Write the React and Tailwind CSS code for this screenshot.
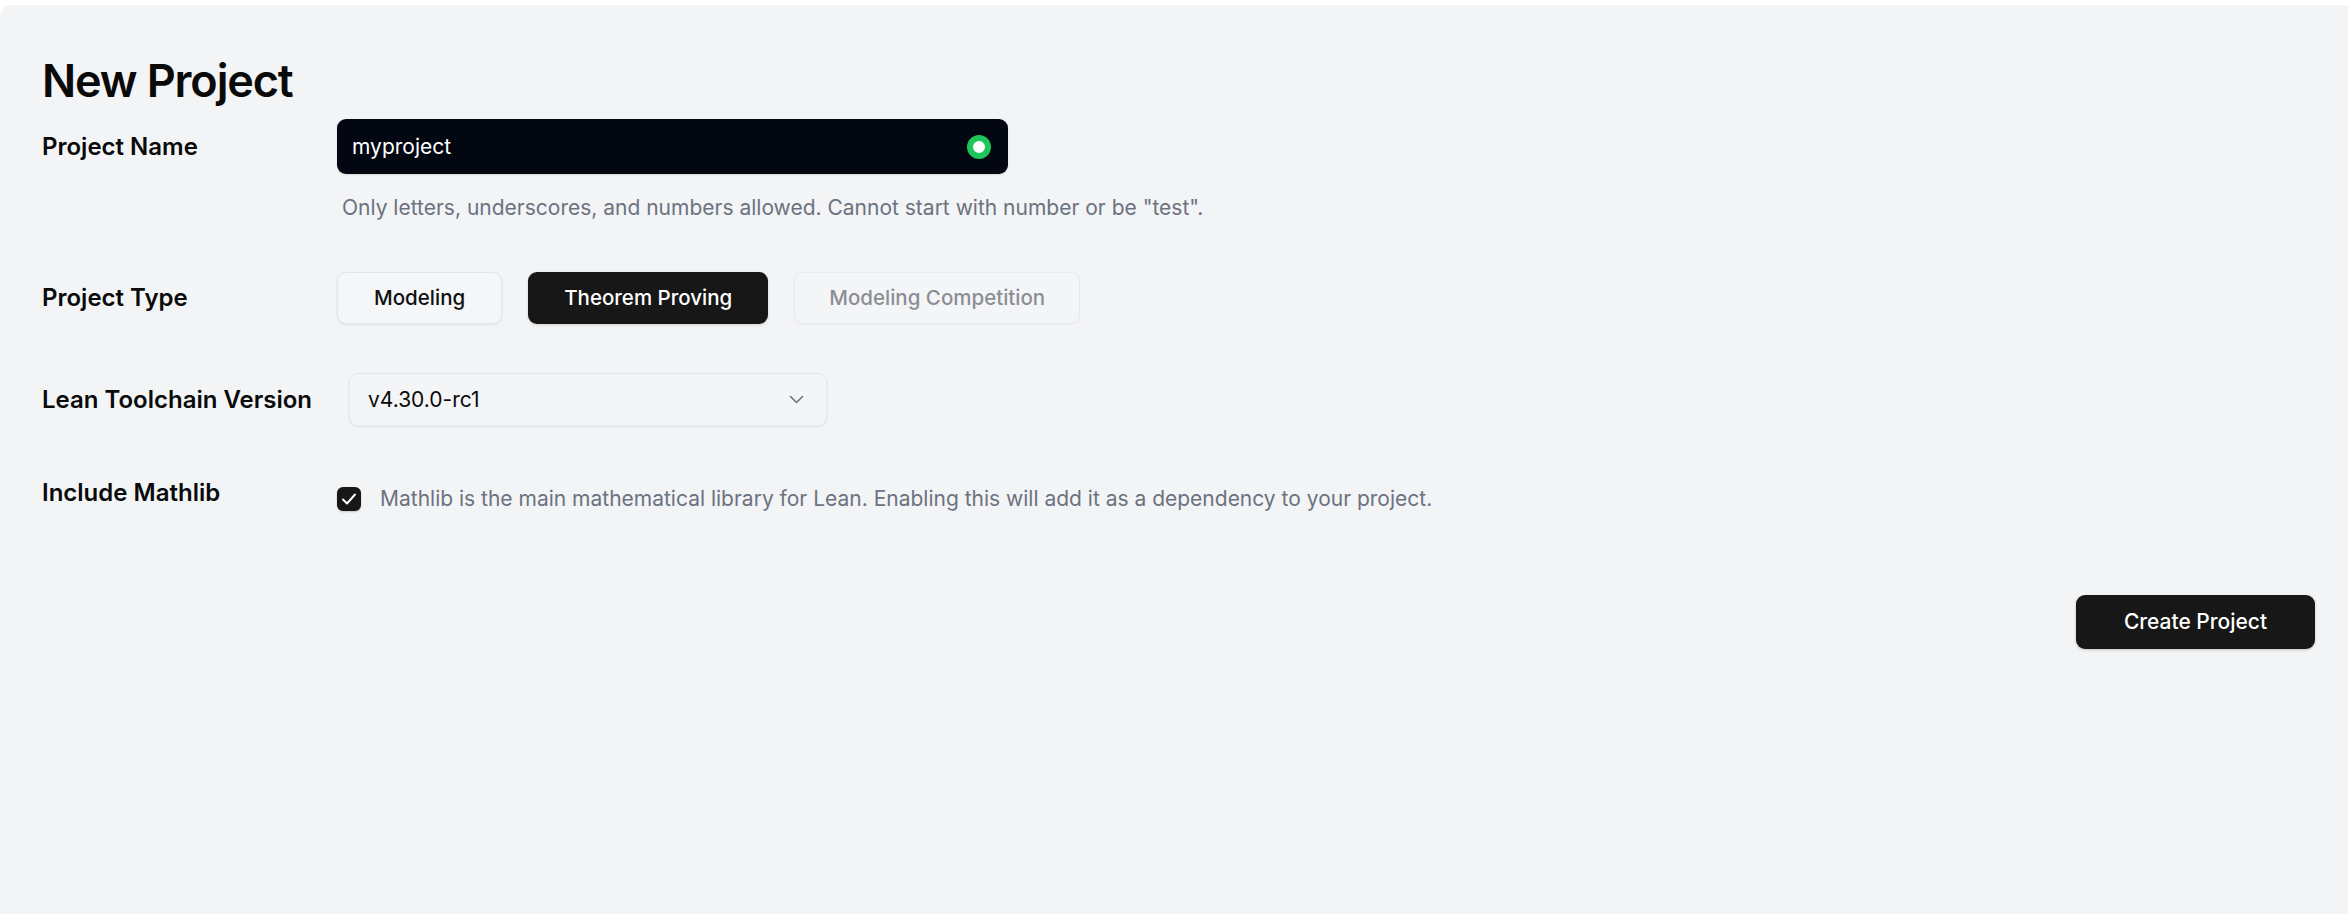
import React, { useState } from "react";

const font = { fontFamily: "Inter, 'Noto Sans', sans-serif" };

function Label({ children, className = "" }) {
  return (
    <div className={`w-[295px] shrink-0 text-[24px] leading-[30px] font-semibold text-[#0a0a0a] ${className}`}>
      {children}
    </div>
  );
}

function TypeButton({ active, disabled, children, onClick }) {
  const base =
    "h-[52px] rounded-[9px] text-[20.5px] font-medium leading-[30px] flex items-center";
  if (active) {
    return (
      <button onClick={onClick} className={`${base} px-[36px] bg-[#171717] text-white shadow-[0_1px_3px_rgba(0,0,0,0.15)]`}>
        {children}
      </button>
    );
  }
  if (disabled) {
    return (
      <button disabled className={`${base} px-[34px] bg-[#f4f5f7] text-[#8b8e94] border border-[#e8e9ec] shadow-[0_1px_2px_rgba(0,0,0,0.03)]`}>
        {children}
      </button>
    );
  }
  return (
    <button onClick={onClick} className={`${base} px-[36px] bg-[#f5f6f8] text-[#111111] border border-[#e3e5e8] shadow-[0_1px_3px_rgba(0,0,0,0.08)]`}>
      {children}
    </button>
  );
}

export default function App() {
  const [type, setType] = useState("theorem");
  const [mathlib, setMathlib] = useState(true);

  return (
    <div className="bg-white pt-[5px] min-h-[914px]" style={font}>
      <div className="bg-[#f3f4f6] rounded-tl-[12px] h-[909px] pl-[42px] pr-[33px] pt-[49px]">
        <h1 className="text-[45px] leading-[54px] font-semibold tracking-[-0.025em] text-[#0a0a0a]">
          New Project
        </h1>

        {/* project name */}
        <div className="mt-[11px] flex items-center">
          <Label>Project Name</Label>
          <div className="w-[671px] h-[55px] rounded-[9px] bg-[#030712] flex items-center pl-[15px] pr-[17px] shadow-[0_1px_2px_rgba(0,0,0,0.1)]">
            <span className="flex-1 text-[21px] text-white leading-[30px]">myproject</span>
            <span className="w-[24px] h-[24px] rounded-full border-[6px] border-[#1ec65a] bg-white" />
          </div>
        </div>
        <p className="mt-[19px] ml-[300px] text-[21px] leading-[30px] text-[#6b7280]">
          Only letters, underscores, and numbers allowed. Cannot start with number or be "test".
        </p>

        {/* project type */}
        <div className="mt-[49px] flex items-center">
          <Label>Project Type</Label>
          <div className="flex gap-[26px]">
            <TypeButton active={type === "modeling"} onClick={() => setType("modeling")}>
              Modeling
            </TypeButton>
            <TypeButton active={type === "theorem"} onClick={() => setType("theorem")}>
              Theorem Proving
            </TypeButton>
            <TypeButton disabled>Modeling Competition</TypeButton>
          </div>
        </div>

        {/* toolchain */}
        <div className="mt-[49px] flex items-center">
          <Label>Lean Toolchain Version</Label>
          <div className="ml-[12px] w-[478px] h-[53px] rounded-[9px] bg-[#f4f5f7] border border-[#e5e7eb] shadow-[0_1px_3px_rgba(0,0,0,0.07)] flex items-center pl-[18px] pr-[22px]">
            <span className="flex-1 text-[21px] leading-[30px] text-[#0a0a0a]">v4.30.0-rc1</span>
            <svg width="15" height="9" viewBox="0 0 15 9" fill="none">
              <path d="M1.5 1.5L7.5 7.5L13.5 1.5" stroke="#6b7280" strokeWidth="1.6" strokeLinecap="round" strokeLinejoin="round" />
            </svg>
          </div>
        </div>

        {/* mathlib */}
        <div className="mt-[52px] flex items-start">
          <Label>Include Mathlib</Label>
          <div className="flex items-center gap-[19px] mt-[6px]">
            <button
              onClick={() => setMathlib(!mathlib)}
              className="w-[24px] h-[24px] rounded-[6px] bg-[#171717] flex items-center justify-center shadow-[0_1px_2px_rgba(0,0,0,0.2)]"
            >
              {mathlib && (
                <svg width="24" height="24" viewBox="0 0 24 24" fill="none">
                  <path d="M6 12.5L10 16.5L18 7.5" stroke="white" strokeWidth="2" strokeLinecap="round" strokeLinejoin="round" />
                </svg>
              )}
            </button>
            <span className="text-[21px] leading-[30px] text-[#6b7280]">
              Mathlib is the main mathematical library for Lean. Enabling this will add it as a dependency to your project.
            </span>
          </div>
        </div>

        <div className="mt-[81px] flex justify-end">
          <button className="w-[239px] h-[54px] rounded-[9px] bg-[#171717] text-white text-[21px] font-medium leading-[30px] shadow-[0_1px_3px_rgba(0,0,0,0.2)]">
            Create Project
          </button>
        </div>
      </div>
    </div>
  );
}
